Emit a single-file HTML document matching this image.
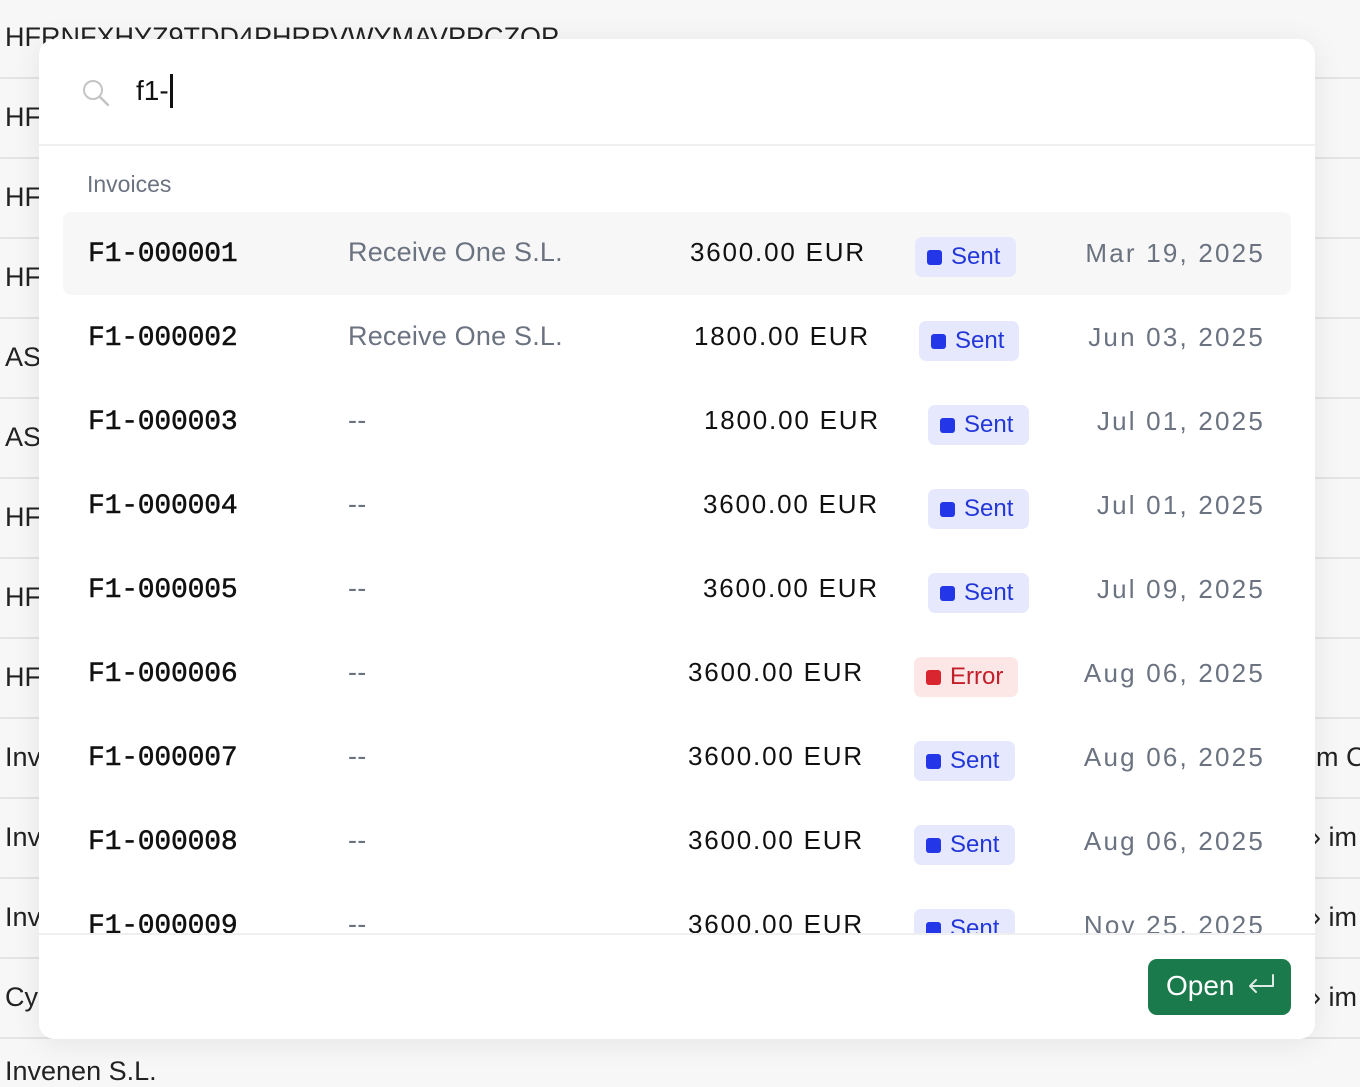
<!DOCTYPE html>
<html><head><meta charset="utf-8"><style>
*{margin:0;padding:0;box-sizing:border-box}
body{width:1360px;height:1076px;overflow:hidden;background:#f7f7f7;font-family:"Liberation Sans",sans-serif;position:relative;color:#111}
.bg{position:absolute;left:5px;font-size:27px;color:#222;white-space:nowrap}
.ln{position:absolute;left:0;width:1360px;height:2px;background:#e4e4e4}
.modal{position:absolute;left:39px;top:39px;width:1276px;height:1000px;background:#fff;border-radius:16px;box-shadow:0 4px 30px rgba(0,0,0,.08);overflow:hidden}
.r{position:absolute;font-size:26px;white-space:nowrap}
.id{font-family:"Liberation Mono",monospace;font-size:28px;color:#111;left:49px;margin-top:2px;-webkit-text-stroke:.5px #111;letter-spacing:-.2px}
.nm{left:309px;color:#6b7280;font-size:27px;letter-spacing:.2px}
.am{color:#111;letter-spacing:1.8px;font-size:26px}
.dt{right:50px;color:#6b7280;letter-spacing:2.2px;margin-top:1px}
.b{position:absolute;height:40px;border-radius:7px;background:#e6e9fd;color:#2337d8;font-size:24px;line-height:40px;padding-left:36px}
.b:before{content:"";position:absolute;left:12px;top:13px;width:15px;height:15px;border-radius:3px;background:#2337e8}
.b.e{background:#fde6e6;color:#c21f2a}
.b.e:before{background:#d9252f}
</style></head><body>
<div class="bg" style="top:22px">HFRNFXHYZ9TDD4PHRRVWYMAVPPCZOP</div>
<div class="bg" style="top:102px">HF</div>
<div class="bg" style="top:182px">HF</div>
<div class="bg" style="top:262px">HF</div>
<div class="bg" style="top:342px">AS</div>
<div class="bg" style="top:422px">AS</div>
<div class="bg" style="top:502px">HF</div>
<div class="bg" style="top:582px">HF</div>
<div class="bg" style="top:662px">HF</div>
<div class="bg" style="top:742px">Inv</div>
<div class="bg" style="top:822px">Inv</div>
<div class="bg" style="top:902px">Inv</div>
<div class="bg" style="top:982px">Cy</div>
<div class="bg" style="top:1056px">Invenen S.L.</div>
<div class="bg" style="top:742px;left:1316px">m C</div>
<div class="bg" style="top:822px;left:1312px">› im</div>
<div class="bg" style="top:902px;left:1312px">› im</div>
<div class="bg" style="top:982px;left:1312px">› im</div>
<div class="ln" style="top:77px"></div><div class="ln" style="top:157px"></div><div class="ln" style="top:237px"></div><div class="ln" style="top:317px"></div><div class="ln" style="top:397px"></div><div class="ln" style="top:477px"></div><div class="ln" style="top:557px"></div><div class="ln" style="top:637px"></div><div class="ln" style="top:717px"></div><div class="ln" style="top:797px"></div><div class="ln" style="top:877px"></div><div class="ln" style="top:957px"></div><div class="ln" style="top:1037px"></div>

<div class="modal">
<svg style="position:absolute;left:42px;top:39px" width="30" height="30" viewBox="0 0 30 30"><circle cx="12" cy="12" r="9" fill="none" stroke="#c4c4c4" stroke-width="2"/><path d="M19 19l8 8" stroke="#c4c4c4" stroke-width="2.4" stroke-linecap="round"/></svg>
<div style="position:absolute;left:97px;top:36px;font-size:28px;color:#111">f1-</div>
<div style="position:absolute;left:131px;top:35px;width:3px;height:34px;background:#111"></div>
<div style="position:absolute;left:0;top:105px;width:100%;height:2px;background:#efefef"></div>
<div style="position:absolute;left:48px;top:132px;font-size:23px;color:#6b7280">Invoices</div>
<div style="position:absolute;left:24px;top:173px;width:1228px;height:83px;background:#f7f7f7;border-radius:8px"></div>

<div class="r id" style="top:198px">F1-000001</div><div class="r nm" style="top:198px">Receive One S.L.</div><div class="r am" style="top:198px;left:651px">3600.00 EUR</div><div class="b" style="top:198px;left:876px;width:101px">Sent</div><div class="r dt" style="top:198px">Mar 19, 2025</div>
<div class="r id" style="top:282px">F1-000002</div><div class="r nm" style="top:282px">Receive One S.L.</div><div class="r am" style="top:282px;left:655px">1800.00 EUR</div><div class="b" style="top:282px;left:880px;width:100px">Sent</div><div class="r dt" style="top:282px">Jun 03, 2025</div>
<div class="r id" style="top:366px">F1-000003</div><div class="r nm" style="top:366px">--</div><div class="r am" style="top:366px;left:665px">1800.00 EUR</div><div class="b" style="top:366px;left:889px;width:101px">Sent</div><div class="r dt" style="top:366px">Jul 01, 2025</div>
<div class="r id" style="top:450px">F1-000004</div><div class="r nm" style="top:450px">--</div><div class="r am" style="top:450px;left:664px">3600.00 EUR</div><div class="b" style="top:450px;left:889px;width:101px">Sent</div><div class="r dt" style="top:450px">Jul 01, 2025</div>
<div class="r id" style="top:534px">F1-000005</div><div class="r nm" style="top:534px">--</div><div class="r am" style="top:534px;left:664px">3600.00 EUR</div><div class="b" style="top:534px;left:889px;width:101px">Sent</div><div class="r dt" style="top:534px">Jul 09, 2025</div>
<div class="r id" style="top:618px">F1-000006</div><div class="r nm" style="top:618px">--</div><div class="r am" style="top:618px;left:649px">3600.00 EUR</div><div class="b e" style="top:618px;left:875px;width:104px">Error</div><div class="r dt" style="top:618px">Aug 06, 2025</div>
<div class="r id" style="top:702px">F1-000007</div><div class="r nm" style="top:702px">--</div><div class="r am" style="top:702px;left:649px">3600.00 EUR</div><div class="b" style="top:702px;left:875px;width:101px">Sent</div><div class="r dt" style="top:702px">Aug 06, 2025</div>
<div class="r id" style="top:786px">F1-000008</div><div class="r nm" style="top:786px">--</div><div class="r am" style="top:786px;left:649px">3600.00 EUR</div><div class="b" style="top:786px;left:875px;width:101px">Sent</div><div class="r dt" style="top:786px">Aug 06, 2025</div>
<div class="r id" style="top:870px">F1-000009</div><div class="r nm" style="top:870px">--</div><div class="r am" style="top:870px;left:649px">3600.00 EUR</div><div class="b" style="top:870px;left:875px;width:101px">Sent</div><div class="r dt" style="top:870px">Nov 25, 2025</div>

<div style="position:absolute;left:0;top:894px;width:100%;height:106px;background:#fff;border-top:2px solid #efefef"></div>
<div style="position:absolute;left:1109px;top:920px;width:143px;height:56px;background:#1b7a4b;border-radius:9px;color:#fff;font-size:28px;line-height:54px;padding-left:18px">Open
<svg style="position:absolute;left:98px;top:14px" width="30" height="26" viewBox="0 0 30 26"><path d="M27 2v11H4M10 7l-6 6 6 6" fill="none" stroke="#fff" stroke-width="2" stroke-linecap="round" stroke-linejoin="round" opacity=".85"/></svg></div>
</div>
</body></html>
